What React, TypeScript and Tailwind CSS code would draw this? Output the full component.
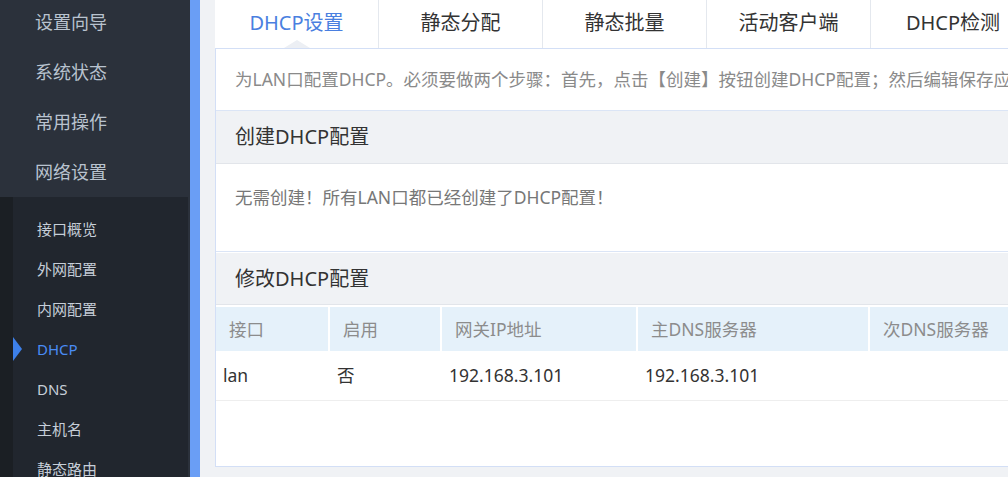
import React from "react";

const topMenu = ["设置向导", "系统状态", "常用操作", "网络设置"];
const subMenu = ["接口概览", "外网配置", "内网配置", "DHCP", "DNS", "主机名", "静态路由"];
const tabs = ["DHCP设置", "静态分配", "静态批量", "活动客户端", "DHCP检测"];

const cols = [
  { title: "接口", value: "lan", w: "w-[112px]" },
  { title: "启用", value: "否", w: "w-[110px]" },
  { title: "网关IP地址", value: "192.168.3.101", w: "w-[194px]" },
  { title: "主DNS服务器", value: "192.168.3.101", w: "w-[230px]" },
  { title: "次DNS服务器", value: "", w: "w-[230px]" },
];

export default function App() {
  return (
    <div className="flex w-[1008px] h-[477px] overflow-hidden bg-[#f0f2f5] font-['Noto_Sans','Noto_Sans_CJK_SC',sans-serif]">
      {/* Sidebar */}
      <div className="w-[190px] shrink-0 flex flex-col bg-[#2b313b]">
        <div className="-mt-[3px]">
          {topMenu.map(item => (
            <div key={item} className="h-[50px] flex items-center pl-[35px] text-[18px] text-[#b9c3cf]">
              {item}
            </div>
          ))}
        </div>
        <div className="flex flex-1 mr-[2px]">
          <div className="w-[13px] bg-[#1b1f24]" />
          <div className="flex-1 bg-[#21262e] pt-[12px]">
            {subMenu.map(item => {
              const active = item === "DHCP";
              return (
                <div key={item} className="relative h-[40px] flex items-center pl-[24px] text-[15px]">
                  {active && (
                    <span className="absolute left-0 top-[8px] w-0 h-0 border-t-[12px] border-b-[12px] border-l-[9px] border-t-transparent border-b-transparent border-l-[#3d80ea]" />
                  )}
                  <span className={active ? "text-[#4a8cf5]" : "text-[#c6ced8]"}>{item}</span>
                </div>
              );
            })}
          </div>
        </div>
      </div>
      <div className="w-[10px] shrink-0 bg-[#6a9ef5]" />

      {/* Main */}
      <div className="flex-1 min-w-0 pl-[15px] flex flex-col">
        <div className="flex h-[48px] bg-white">
          {tabs.map((tab, i) => (
            <div
              key={tab}
              className={`relative w-[164px] shrink-0 flex items-center justify-center pb-[3px] text-[20px] ${i === 0 ? "text-[#4a7fe0]" : "text-[#333]"} ${i < tabs.length - 1 ? "border-r border-[#e4e8ee]" : ""}`}
            >
              {tab}
              {i === 0 && (
                <span className="absolute bottom-0 left-[69px] w-0 h-0 border-l-[13px] border-r-[13px] border-b-[8px] border-l-transparent border-r-transparent border-b-[#eceff4]" />
              )}
            </div>
          ))}
        </div>

        <div className="h-[419px] bg-white border-t border-l border-b border-[#d3dff6] flex flex-col">
          <div className="h-[61px] flex items-center pl-[19px] text-[17.5px] text-[#8a8a8a] whitespace-nowrap">
            为LAN口配置DHCP。必须要做两个步骤：首先，点击【创建】按钮创建DHCP配置；然后编辑保存应用DHCP配置。
          </div>
          <div className="h-[54px] flex items-center pl-[19px] bg-[#f0f2f5] border-t border-b border-t-[#dbe5f6] border-b-[#e2e5ea] text-[20px] text-[#333]">
            创建DHCP配置
          </div>
          <div className="h-[88px] pl-[19px] pt-[21px] text-[17.5px] leading-[24px] text-[#777] border-b border-[#dbe5f6]">
            无需创建！所有LAN口都已经创建了DHCP配置！
          </div>
          <div className="h-[53px] flex items-center pl-[19px] pt-[1px] bg-[#f0f2f5] border-t border-b border-t-white border-b-[#e2e5ea] text-[20px] text-[#333]">
            修改DHCP配置
          </div>
          <div className="h-[2px]" />
          <div className="flex h-[44px] gap-[2px]">
            {cols.map(c => (
              <div key={c.title} className={`${c.w} shrink-0 flex items-center pl-[13px] bg-[#e5f1fa] text-[17.5px] text-[#8c8c8c] whitespace-nowrap`}>
                {c.title}
              </div>
            ))}
          </div>
          <div className="flex h-[50px] gap-[2px] border-b border-[#eeeeee]">
            {cols.map(c => (
              <div key={c.title} className={`${c.w} shrink-0 flex items-center pl-[7px] text-[17.5px] text-[#333] whitespace-nowrap`}>
                {c.value}
              </div>
            ))}
          </div>
        </div>
      </div>
    </div>
  );
}
